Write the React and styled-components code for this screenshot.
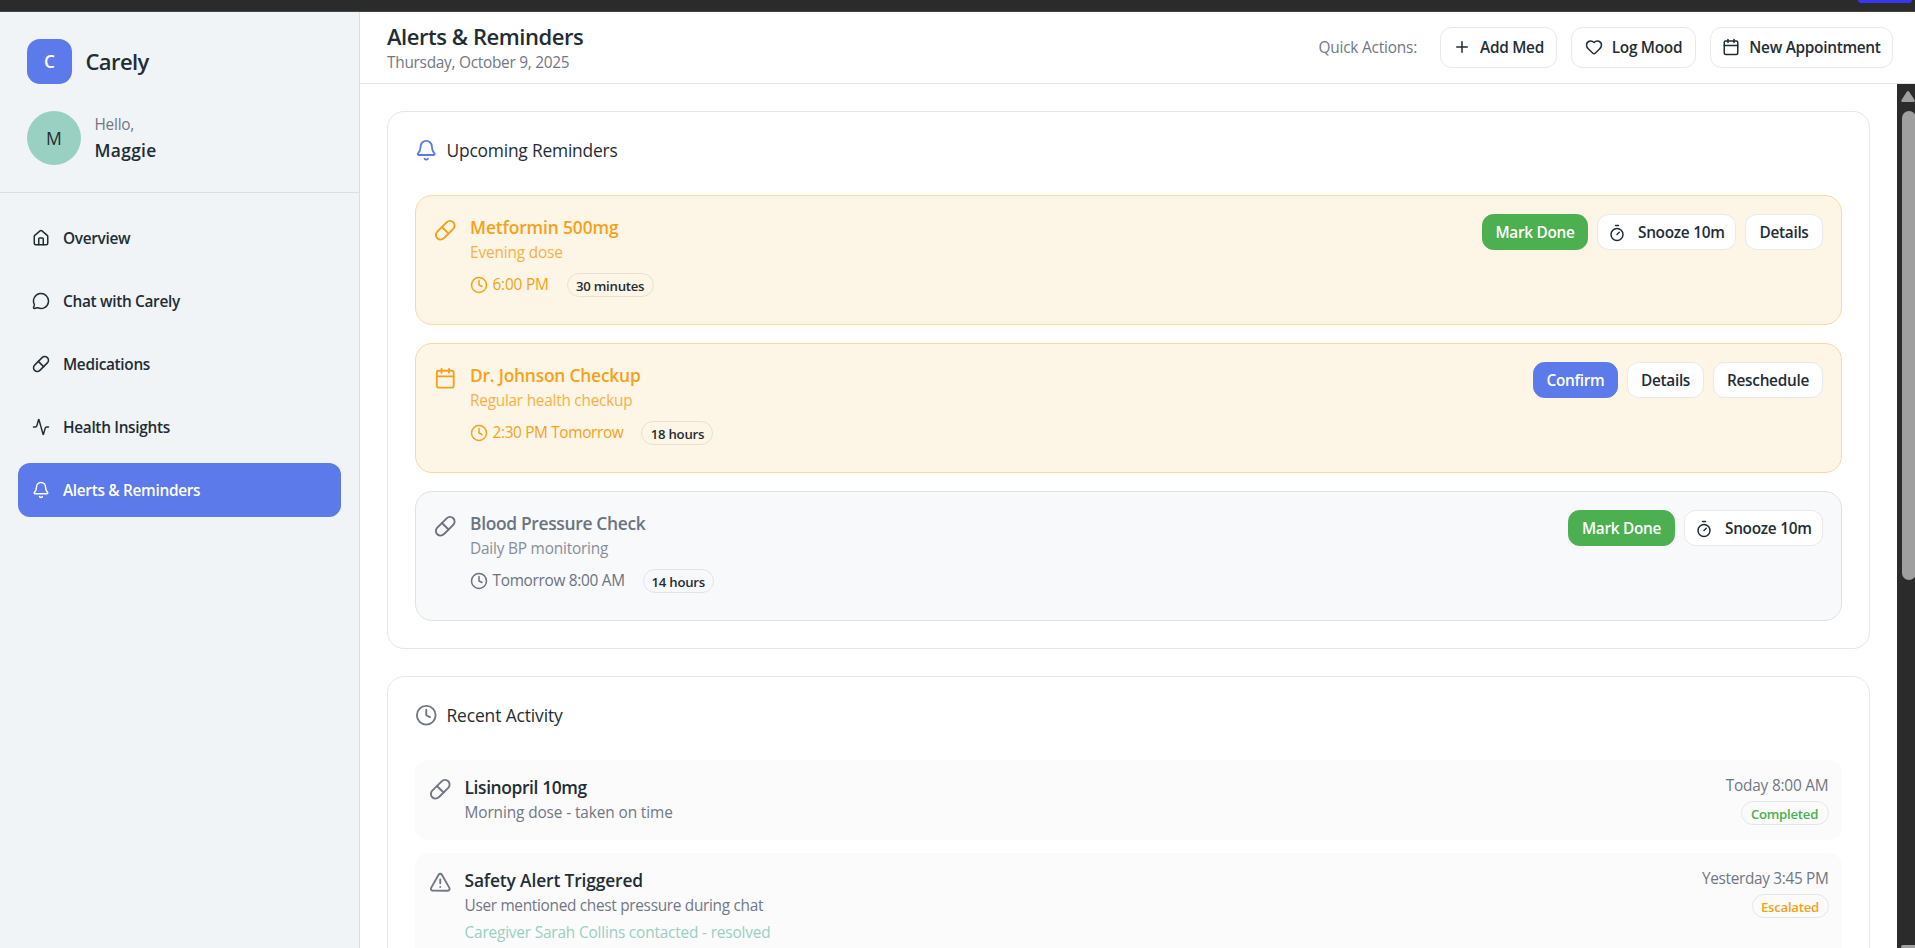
import React from "react";
import styled, { createGlobalStyle, css } from "styled-components";
import {
  Activity,
  Bell,
  Calendar,
  Clock,
  Heart,
  House,
  MessageCircle,
  Pill,
  Plus,
  Timer,
  TriangleAlert,
} from "lucide-react";

const GlobalStyle = createGlobalStyle`
  *, *::before, *::after { box-sizing: border-box; }
  body {
    margin: 0;
    overflow: hidden;
    background: #ffffff;
    color: #1f2d35;
    font-family: "Segoe UI", "Open Sans", "Noto Sans", sans-serif;
  }
  button { font-family: inherit; }
  svg { display: block; flex: none; }
`;

const Page = styled.div`
  display: flex;
  flex-direction: column;
  width: 1915px;
  height: 948px;
  overflow: hidden;
`;

const WindowBar = styled.div`
  display: flex;
  justify-content: flex-end;
  flex: none;
  height: 12px;
  padding-right: 3px;
  background: #2b2b2b;
  border-bottom: 1px solid #454545;
`;

const WindowTab = styled.div`
  width: 54px;
  height: 3px;
  border-radius: 0 0 4px 4px;
  background: #3b35f0;
`;

const Shell = styled.div`
  display: flex;
  flex: 1;
  min-height: 0;
`;

const Sidebar = styled.aside`
  flex: none;
  width: 360px;
  background: #f0f4f7;
  border-right: 1px solid #d9dee3;
`;

const SidebarTop = styled.div`
  display: flex;
  flex-direction: column;
  gap: 27px;
  height: 181px;
  padding: 27px;
  border-bottom: 1px solid #d9dee3;
`;

const Brand = styled.div`
  display: flex;
  align-items: center;
  gap: 13.5px;
`;

const Logo = styled.div`
  display: grid;
  place-items: center;
  width: 45px;
  height: 45px;
  padding-bottom: 1px;
  border-radius: 13px;
  background: #5c7aea;
  color: #ffffff;
  font-size: 17.4px;
  font-weight: 600;
`;

const BrandName = styled.div`
  padding-bottom: 2px;
  font-size: 22px;
  font-weight: 600;
  letter-spacing: -0.6px;
`;

const Profile = styled.div`
  display: flex;
  align-items: center;
  gap: 13.5px;
`;

const Avatar = styled.div`
  display: grid;
  place-items: center;
  width: 54px;
  height: 54px;
  border-radius: 50%;
  background: #9ad0c2;
  font-size: 17.6px;
`;

const ProfileText = styled.div`
  padding-top: 2px;
`;

const Greeting = styled.div`
  color: #717785;
  font-size: 15.4px;
  line-height: 22.5px;
  letter-spacing: -0.25px;
`;

const UserName = styled.div`
  font-size: 17.4px;
  font-weight: 600;
  line-height: 27px;
  letter-spacing: 0.3px;
`;

const Nav = styled.nav`
  display: flex;
  flex-direction: column;
  gap: 9px;
  padding: 18px;
`;

const NavItem = styled.a`
  display: flex;
  align-items: center;
  gap: 13.5px;
  height: 54px;
  padding: 0 13.5px;
  border-radius: 12px;
  font-size: 15.4px;
  font-weight: 600;
  letter-spacing: -0.32px;
  ${(p) => p.$active && css`
    background: #5c7aea;
    color: #ffffff;
  `}
`;

const Main = styled.main`
  display: flex;
  flex-direction: column;
  flex: 1;
  min-width: 0;
`;

const Header = styled.header`
  display: flex;
  align-items: center;
  justify-content: space-between;
  flex: none;
  height: 72px;
  padding: 0 22px 0 27px;
  border-bottom: 1px solid #e3e4e6;
`;

const Heading = styled.div`
  padding-top: 1px;
`;

const PageTitle = styled.h1`
  margin: 0;
  font-size: 22px;
  font-weight: 600;
  line-height: 28px;
  letter-spacing: -0.45px;
`;

const PageDate = styled.div`
  padding-top: 1px;
  color: #717785;
  font-size: 15.4px;
  line-height: 24px;
  letter-spacing: -0.27px;
`;

const QuickActions = styled.div`
  display: flex;
  align-items: center;
  gap: 14px;
  padding-bottom: 1px;
`;

const QuickLabel = styled.span`
  margin-right: 9px;
  color: #717785;
  font-size: 15.4px;
  letter-spacing: -0.2px;
`;

const Button = styled.button`
  display: inline-flex;
  align-items: center;
  justify-content: center;
  gap: ${(p) => p.$gap || 9}px;
  flex: none;
  width: ${(p) => p.$width}px;
  height: ${(p) => (p.$tall ? 41 : 36)}px;
  padding: ${(p) => (p.$tall ? 0 : 1)}px 0 0;
  border: 1px solid #e8e9eb;
  border-radius: 11.5px;
  background: #ffffff;
  color: #1f2d35;
  font-size: 15.4px;
  font-weight: 600;
  white-space: nowrap;
  letter-spacing: -0.3px;
  ${(p) => p.$fill && css`
    border-color: ${p.$fill};
    background: ${p.$fill};
    color: #ffffff;
  `}
`;

const Body = styled.div`
  display: flex;
  flex: 1;
  min-height: 0;
`;

const Content = styled.div`
  display: flex;
  flex-direction: column;
  gap: 27px;
  flex: 1;
  min-width: 0;
  padding: 27px;
  overflow: hidden;
`;

const Panel = styled.section`
  flex: none;
  padding: 27px;
  border: 1px solid #e6e7e9;
  border-radius: 17px;
  background: #ffffff;
`;

const PanelTitle = styled.h2`
  display: flex;
  align-items: center;
  gap: 9px;
  height: 23px;
  margin: 0 0 33px;
  font-size: 17.4px;
  font-weight: 400;
  letter-spacing: ${(p) => p.$track ?? -0.2}px;
  svg { color: ${(p) => p.$icon}; }
  span { padding-bottom: 2px; }
`;

const ReminderList = styled.div`
  display: flex;
  flex-direction: column;
  gap: 18px;
`;

const Reminder = styled.article`
  display: flex;
  gap: 13.5px;
  height: 130px;
  padding: 18px;
  border: 1px solid ${(p) => (p.$soon ? "#fad9a0" : "#dfe2e6")};
  border-radius: 17px;
  background: ${(p) => (p.$soon ? "#fdf5e6" : "#f8f9fb")};
  color: ${(p) => (p.$soon ? "#f6a11a" : "#6c7380")};
`;

const ItemIcon = styled.div`
  flex: none;
  padding-top: 4.5px;
  color: ${(p) => p.$color || "inherit"};
`;

const ItemText = styled.div`
  flex: 1;
  min-width: 0;
`;

const ItemTitle = styled.h3`
  margin: 0;
  font-size: 17.4px;
  font-weight: 600;
  line-height: 27px;
  letter-spacing: ${(p) => p.$track ?? -0.22}px;
`;

const ItemDetail = styled.div`
  margin-bottom: -1px;
  padding-top: 1px;
  color: ${(p) => p.$color || "inherit"};
  opacity: ${(p) => (p.$faded ? 0.8 : 1)};
  font-size: 15.4px;
  line-height: 22.5px;
  letter-spacing: ${(p) => p.$track ?? -0.2}px;
`;

const ItemNote = styled(ItemDetail)`
  margin-top: 4.5px;
`;

const TimeRow = styled.div`
  display: flex;
  align-items: center;
  gap: 18px;
  margin-top: 9px;
`;

const Time = styled.div`
  display: flex;
  align-items: center;
  gap: 4.5px;
  font-size: 15.4px;
  line-height: 22.5px;
  letter-spacing: ${(p) => p.$track ?? -0.2}px;
  span { padding-top: 1.5px; }
`;

const Badge = styled.span`
  display: inline-flex;
  align-items: center;
  justify-content: center;
  width: ${(p) => p.$width}px;
  height: 24px;
  padding-top: 2px;
  border: 1px solid rgba(31, 45, 53, 0.1);
  border-radius: 12px;
  color: ${(p) => p.$color || "#1f2d35"};
  font-size: 13.2px;
  font-weight: 600;
  white-space: nowrap;
  letter-spacing: -0.25px;
`;

const Buttons = styled.div`
  display: flex;
  align-items: flex-start;
  gap: 9px;
`;

const ActivityList = styled.div`
  display: flex;
  flex-direction: column;
  gap: 13px;
`;

const ActivityRow = styled.article`
  display: flex;
  gap: 13.5px;
  height: ${(p) => p.$height}px;
  padding: 13.5px;
  border-radius: 13px;
  background: #fbfbfb;
`;

const ActivityMeta = styled.div`
  display: flex;
  flex-direction: column;
  align-items: flex-end;
  gap: 5px;
`;

const ScrollTrack = styled.div`
  display: flex;
  flex-direction: column;
  flex: none;
  width: 18px;
  padding: 7px 0 0 4px;
  overflow: hidden;
  background: #2b2b2b;
`;

const ScrollThumb = styled.div`
  flex: none;
  width: 14px;
  height: 469px;
  margin: 9px 0 0 1px;
  border-radius: 7px;
  background: #9f9f9f;
`;

const ScrollEnd = styled.div`
  width: 14px;
  height: 3px;
  margin-top: auto;
  border-radius: 2px 0 0 0;
  background: #9f9f9f;
`;

const ArrowUp = () => (
  <svg width="14" height="11" viewBox="0 0 14 11">
    <path d="M5.8 0.8Q7 -0.6 8.2 0.8L13.6 9Q14.2 11 12.6 11H1.6Q-0.2 11 0.5 9Z" fill="#9f9f9f" />
  </svg>
);

const GREEN = "#4caf50";
const BLUE = "#5c7aea";
const ORANGE = "#f6a11a";
const GRAY = "#717785";

const navItems = [
  { label: "Overview", Icon: House },
  { label: "Chat with Carely", Icon: MessageCircle },
  { label: "Medications", Icon: Pill },
  { label: "Health Insights", Icon: Activity },
  { label: "Alerts & Reminders", Icon: Bell, active: true },
];

const quickActions = [
  { label: "Add Med", Icon: Plus, width: 117 },
  { label: "Log Mood", Icon: Heart, width: 125 },
  { label: "New Appointment", Icon: Calendar, width: 183 },
];

const reminders = [
  {
    title: "Metformin 500mg", titleTrack: -0.13,
    detail: "Evening dose", detailTrack: -0.16,
    time: "6:00 PM", due: "30 minutes", dueWidth: 87,
    Icon: Pill, soon: true,
    actions: [
      { label: "Mark Done", fill: GREEN, width: 106 },
      { label: "Snooze 10m", Icon: Timer, width: 139, gap: 11.5 },
      { label: "Details", width: 78 },
    ],
  },
  {
    title: "Dr. Johnson Checkup",
    detail: "Regular health checkup", detailTrack: -0.25,
    time: "2:30 PM Tomorrow", timeTrack: -0.35, due: "18 hours", dueWidth: 72,
    Icon: Calendar, soon: true,
    actions: [
      { label: "Confirm", fill: BLUE, width: 85 },
      { label: "Details", width: 77 },
      { label: "Reschedule", width: 110 },
    ],
  },
  {
    title: "Blood Pressure Check", titleTrack: -0.32,
    detail: "Daily BP monitoring",
    time: "Tomorrow 8:00 AM", timeTrack: -0.3, due: "14 hours", dueWidth: 71,
    Icon: Pill,
    actions: [
      { label: "Mark Done", fill: GREEN, width: 107 },
      { label: "Snooze 10m", Icon: Timer, width: 139, gap: 11.5 },
    ],
  },
];

const activities = [
  {
    title: "Lisinopril 10mg", titleTrack: -0.38,
    detail: "Morning dose - taken on time", detailTrack: -0.11,
    time: "Today 8:00 AM",
    status: "Completed", statusColor: GREEN, statusWidth: 88, Icon: Pill, height: 80,
  },
  {
    title: "Safety Alert Triggered", titleTrack: -0.15,
    detail: "User mentioned chest pressure during chat", detailTrack: -0.31,
    time: "Yesterday 3:45 PM", timeTrack: -0.33,
    note: "Caregiver Sarah Collins contacted - resolved", noteTrack: -0.18,
    status: "Escalated", statusColor: ORANGE, statusWidth: 77, Icon: TriangleAlert, height: 107,
  },
];

export default function App() {
  return (
    <>
      <GlobalStyle />
      <Page>
        <WindowBar><WindowTab /></WindowBar>
        <Shell>
          <Sidebar>
            <SidebarTop>
              <Brand>
                <Logo>C</Logo>
                <BrandName>Carely</BrandName>
              </Brand>
              <Profile>
                <Avatar>M</Avatar>
                <ProfileText>
                  <Greeting>Hello,</Greeting>
                  <UserName>Maggie</UserName>
                </ProfileText>
              </Profile>
            </SidebarTop>
            <Nav>
              {navItems.map(({ label, Icon, active }) => (
                <NavItem key={label} $active={active}>
                  <Icon size={18} />
                  {label}
                </NavItem>
              ))}
            </Nav>
          </Sidebar>
          <Main>
            <Header>
              <Heading>
                <PageTitle>Alerts &amp; Reminders</PageTitle>
                <PageDate>Thursday, October 9, 2025</PageDate>
              </Heading>
              <QuickActions>
                <QuickLabel>Quick Actions:</QuickLabel>
                {quickActions.map(({ label, Icon, width }) => (
                  <Button key={label} $width={width} $tall>
                    <Icon size={18} />
                    {label}
                  </Button>
                ))}
              </QuickActions>
            </Header>
            <Body>
              <Content>
                <Panel>
                  <PanelTitle $icon={BLUE}><Bell size={22.5} /><span>Upcoming Reminders</span></PanelTitle>
                  <ReminderList>
                    {reminders.map((r) => (
                      <Reminder key={r.title} $soon={r.soon}>
                        <ItemIcon><r.Icon size={22.5} /></ItemIcon>
                        <ItemText>
                          <ItemTitle $track={r.titleTrack}>{r.title}</ItemTitle>
                          <ItemDetail $faded $track={r.detailTrack}>{r.detail}</ItemDetail>
                          <TimeRow>
                            <Time $track={r.timeTrack}><Clock size={18} /><span>{r.time}</span></Time>
                            <Badge $width={r.dueWidth}>{r.due}</Badge>
                          </TimeRow>
                        </ItemText>
                        <Buttons>
                          {r.actions.map((a) => (
                            <Button key={a.label} $width={a.width} $fill={a.fill} $gap={a.gap}>
                              {a.Icon && <a.Icon size={18} />}
                              {a.label}
                            </Button>
                          ))}
                        </Buttons>
                      </Reminder>
                    ))}
                  </ReminderList>
                </Panel>
                <Panel>
                  <PanelTitle $icon={GRAY} $track={-0.12}><Clock size={22.5} /><span>Recent Activity</span></PanelTitle>
                  <ActivityList>
                    {activities.map((a) => (
                      <ActivityRow key={a.title} $height={a.height}>
                        <ItemIcon $color={GRAY}><a.Icon size={22.5} /></ItemIcon>
                        <ItemText>
                          <ItemTitle $track={a.titleTrack}>{a.title}</ItemTitle>
                          <ItemDetail $color={GRAY} $track={a.detailTrack}>{a.detail}</ItemDetail>
                          {a.note && <ItemNote $color="#9ad0c2" $track={a.noteTrack}>{a.note}</ItemNote>}
                        </ItemText>
                        <ActivityMeta>
                          <ItemDetail $color={GRAY} $track={a.timeTrack}>{a.time}</ItemDetail>
                          <Badge $width={a.statusWidth} $color={a.statusColor}>{a.status}</Badge>
                        </ActivityMeta>
                      </ActivityRow>
                    ))}
                  </ActivityList>
                </Panel>
              </Content>
              <ScrollTrack>
                <ArrowUp />
                <ScrollThumb />
                <ScrollEnd />
              </ScrollTrack>
            </Body>
          </Main>
        </Shell>
      </Page>
    </>
  );
}
